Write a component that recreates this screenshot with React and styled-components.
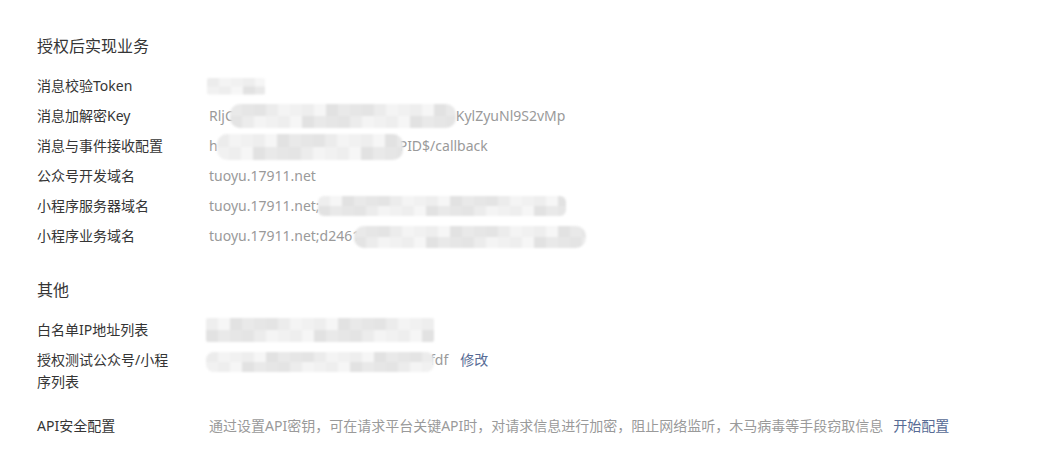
import styled, { createGlobalStyle } from "styled-components";

const GlobalStyle = createGlobalStyle`
  html, body {
    margin: 0;
    padding: 0;
    background: #fff;
  }
  body {
    font-family: "Noto Sans", "Noto Sans CJK SC", sans-serif;
    font-size: 14px;
    color: #353535;
  }
`;

const Page = styled.div`
  padding: 34px 37px 0 37px;
  width: 1054px;
  height: 472px;
  box-sizing: border-box;
  overflow: hidden;
`;

const Section = styled.section`
  margin-bottom: ${(p) => p.$gap || 0}px;
`;

const SectionTitle = styled.h3`
  margin: 0 0 13px 0;
  font-size: 16px;
  font-weight: 400;
  line-height: 24px;
  color: #353535;
`;

const Row = styled.div`
  display: flex;
  align-items: flex-start;
  padding: 4px 0;
  line-height: 22px;
`;

const Label = styled.div`
  width: 136px;
  margin-right: 36px;
  flex-shrink: 0;
  color: #353535;
`;

const Value = styled.div`
  display: flex;
  align-items: center;
  white-space: nowrap;
  color: #9a9a9a;
  height: 22px;
`;

const Link = styled.a`
  color: #576b95;
  text-decoration: none;
  margin-left: ${(p) => p.$ml || 0}px;
  cursor: pointer;
`;

const Mosaic = styled.span`
  display: inline-block;
  position: relative;
  z-index: 1;
  width: ${(p) => p.$w}px;
  height: ${(p) => p.$h}px;
  margin: ${(p) => p.$m || "0"};
  border-radius: ${(p) => p.$r || 4}px;
  background: ${(p) => p.$bg};
  filter: blur(1.2px);
`;

const shades = ["#eeeeee", "#e6e6e6", "#f1f1f1", "#e9e9e9", "#f4f4f4", "#e2e2e2", "#ececec", "#f6f6f6", "#e4e4e4"];

function mosaicBg(w, seed) {
  const tile = 12;
  const rows = [0, 1].map((r) => {
    const stops = [];
    for (let x = 0, i = 0; x < w; x += tile, i++) {
      const c = shades[(i * 7 + seed * 3 + r * 5) % shades.length];
      stops.push(`${c} ${x}px`, `${c} ${x + tile}px`);
    }
    return `linear-gradient(90deg, ${stops.join(", ")})`;
  });
  return `${rows[0]} top / 100% 50% no-repeat, ${rows[1]} bottom / 100% 50% no-repeat`;
}

const Blur = ({ w, h, seed = 1, m, r }) => (
  <Mosaic $w={w} $h={h} $m={m} $r={r} $bg={mosaicBg(w, seed)} />
);

const App = () => {
  return (
    <>
      <GlobalStyle />
      <Page>
        <Section $gap={27}>
          <SectionTitle>授权后实现业务</SectionTitle>
          <Row>
            <Label>消息校验Token</Label>
            <Value>
              <Blur w={58} h={17} seed={2} m="0 0 0 -2px" r={2} />
            </Value>
          </Row>
          <Row>
            <Label>消息加解密Key</Label>
            <Value>
              RljC
              <Blur w={226} h={24} seed={4} m="0 0 0 -4px" r={10} />
              KylZyuNl9S2vMp
            </Value>
          </Row>
          <Row>
            <Label>消息与事件接收配置</Label>
            <Value>
              h
              <Blur w={186} h={26} seed={5} m="2px -4px 0 -1px" r={10} />
              PID$/callback
            </Value>
          </Row>
          <Row>
            <Label>公众号开发域名</Label>
            <Value>tuoyu.17911.net</Value>
          </Row>
          <Row>
            <Label>小程序服务器域名</Label>
            <Value>
              tuoyu.17911.net;
              <Blur w={248} h={20} seed={6} m="0 0 0 -2px" r={6} />
            </Value>
          </Row>
          <Row>
            <Label>小程序业务域名</Label>
            <Value>
              tuoyu.17911.net;d2461
              <Blur w={232} h={22} seed={7} m="2px 0 0 -6px" r={10} />
            </Value>
          </Row>
        </Section>

        <Section $gap={14}>
          <SectionTitle>其他</SectionTitle>
          <Row>
            <Label>白名单IP地址列表</Label>
            <Value>
              <Blur w={228} h={24} seed={3} m="0 0 0 -3px" r={2} />
            </Value>
          </Row>
          <Row>
            <Label>授权测试公众号/小程序列表</Label>
            <Value>
              <Blur w={228} h={20} seed={8} m="4px -4px 0 -3px" r={8} />
              fdf
              <Link $ml={12}>修改</Link>
            </Value>
          </Row>
        </Section>

        <Row>
          <Label>API安全配置</Label>
          <Value>
            通过设置API密钥，可在请求平台关键API时，对请求信息进行加密，阻止网络监听，木马病毒等手段窃取信息
            <Link $ml={10}>开始配置</Link>
          </Value>
        </Row>
      </Page>
    </>
  );
};

export default App;
